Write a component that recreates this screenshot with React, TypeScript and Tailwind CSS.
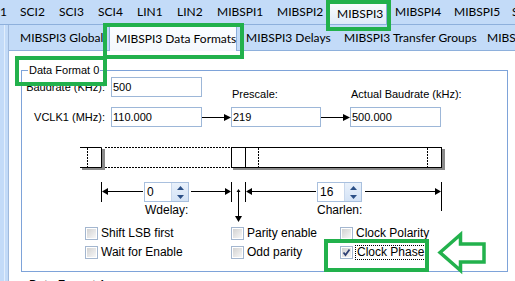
import React from "react";

const beforeTabs = [
  { label: "1", w: "w-[20px]" },
  { label: "SCI2", w: "w-[39px]" },
  { label: "SCI3", w: "w-[39px]" },
  { label: "SCI4", w: "w-[39px]" },
  { label: "LIN1", w: "w-[40px]" },
  { label: "LIN2", w: "w-[40px]" },
  { label: "MIBSPI1", w: "w-[60px]" },
  { label: "MIBSPI2", w: "w-[52px]" },
];

const afterTabs = [
  { label: "MIBSPI4", w: "w-[59px]" },
  { label: "MIBSPI5", w: "w-[58px]" },
  { label: "SCI5", w: "w-[40px]" },
];

function Field({ value, w = "w-[91px]" }: { value: string; w?: string }) {
  return (
    <div
      className={`${w} h-[20px] border border-[#9db7d8] bg-white flex items-center pl-[1px] text-[11px] text-black`}
    >
      {value}
    </div>
  );
}

function Spin({ value }: { value: string }) {
  return (
    <div className="flex w-[45px] h-[20px] border border-[#a9c0de] bg-white">
      <div className="flex-1 flex items-center pl-[2px] text-[12px] leading-none">{value}</div>
      <div className="w-[17px] flex flex-col border-l border-[#c9d8ec] bg-gradient-to-b from-[#e9f1fb] to-[#d4e3f6]">
        <div className="flex-1 flex items-center justify-center">
          <svg width="7" height="4" viewBox="0 0 7 4">
            <path d="M3.5 0 L7 4 L0 4 Z" fill="#2b4f86" />
          </svg>
        </div>
        <div className="flex-1 flex items-center justify-center">
          <svg width="7" height="4" viewBox="0 0 7 4">
            <path d="M0 0 L7 0 L3.5 4 Z" fill="#2b4f86" />
          </svg>
        </div>
      </div>
    </div>
  );
}

function Check({ label, checked, focus }: { label: string; checked?: boolean; focus?: boolean }) {
  return (
    <div className="flex items-center h-[13px]">
      <div className="w-[13px] h-[13px] border border-[#a3b6cf] bg-white p-[1px] shrink-0">
        <div className="w-full h-full bg-gradient-to-br from-[#d2d2d2] to-[#f7f7f7] flex items-center justify-center">
          {checked && (
            <svg width="9" height="9" viewBox="0 0 9 9">
              <path d="M1.5 4.5 L3.5 7 L7.5 1.5" stroke="#2d3f73" strokeWidth="1.8" fill="none" />
            </svg>
          )}
        </div>
      </div>
      <span
        className={`ml-[3px] text-[12px] leading-[13px] whitespace-nowrap ${
          focus ? "outline outline-1 outline-dotted outline-black px-[1px]" : ""
        }`}
      >
        {label}
      </span>
    </div>
  );
}

function Diagram() {
  const head = (x: number, y: number, dir: "l" | "r" | "d") => {
    if (dir === "l") return <path d={`M${x} ${y} L${x + 6} ${y - 3.5} L${x + 6} ${y + 3.5} Z`} fill="#000" />;
    if (dir === "r") return <path d={`M${x} ${y} L${x - 6} ${y - 3.5} L${x - 6} ${y + 3.5} Z`} fill="#000" />;
    return <path d={`M${x} ${y} L${x - 3.5} ${y - 6} L${x + 3.5} ${y - 6} Z`} fill="#000" />;
  };
  return (
    <svg width="372" height="84" viewBox="76 143 372 84" className="block">
      {/* shadows */}
      <rect x="102" y="151" width="3" height="21" fill="#8a8a8a" />
      <rect x="82" y="169" width="23" height="3" fill="#8a8a8a" />
      <rect x="442" y="151" width="3" height="21" fill="#8a8a8a" />
      <rect x="233" y="169" width="212" height="3" fill="#8a8a8a" />
      {/* small left box */}
      <path d="M80 149.5 H101.5 V169.5 H80" stroke="#000" fill="none" />
      <line x1="87.5" y1="150" x2="87.5" y2="169" stroke="#000" strokeDasharray="2 1" />
      {/* dotted span */}
      <line x1="105" y1="149.5" x2="231" y2="149.5" stroke="#000" strokeDasharray="2 1" />
      <line x1="105" y1="169.5" x2="231" y2="169.5" stroke="#000" strokeDasharray="2 1" />
      {/* big box */}
      <rect x="231.5" y="149.5" width="210" height="20" stroke="#000" fill="#fff" />
      <line x1="245.5" y1="150" x2="245.5" y2="169" stroke="#000" />
      <line x1="258.5" y1="150" x2="258.5" y2="169" stroke="#000" strokeDasharray="2 1" />
      <line x1="427.5" y1="150" x2="427.5" y2="169" stroke="#000" strokeDasharray="2 1" />
      {/* dimension line */}
      <line x1="101.5" y1="184" x2="101.5" y2="204" stroke="#000" />
      <line x1="231.5" y1="184" x2="231.5" y2="204" stroke="#000" />
      <line x1="245.5" y1="184" x2="245.5" y2="204" stroke="#000" />
      <line x1="441.5" y1="184" x2="441.5" y2="213" stroke="#000" />
      <line x1="106" y1="193.5" x2="143" y2="193.5" stroke="#000" />
      {head(102, 193.5, "l")}
      <line x1="191" y1="193.5" x2="226" y2="193.5" stroke="#000" />
      {head(231, 193.5, "r")}
      <line x1="251" y1="193.5" x2="316" y2="193.5" stroke="#000" />
      {head(246, 193.5, "l")}
      <line x1="365" y1="193.5" x2="436" y2="193.5" stroke="#000" />
      {head(441, 193.5, "r")}
      <path d="M238.5 191 L236.5 194 L240.5 194 Z" fill="#000" />
      <line x1="238.5" y1="193" x2="238.5" y2="219" stroke="#000" />
      {head(238.5, 224, "d")}
    </svg>
  );
}

export default function App() {
  return (
    <div className="w-[515px] h-[281px] overflow-hidden relative bg-[#c3dbf8] font-['Liberation_Sans',sans-serif] text-black">
      {/* top tab strip */}
      <div className="h-[25px] w-[515px] overflow-hidden flex items-end border-b border-[#8eb0dc] font-['Lato',sans-serif] text-[12px] whitespace-nowrap">
        {beforeTabs.map((t, i) => (
          <div key={i} className={`${t.w} shrink-0 flex items-center h-[24px]`}>
            {t.label}
          </div>
        ))}
        <div className="w-[58px] h-[24px] shrink-0 -mb-[1px] border border-b-0 border-[#8eb0dc] bg-gradient-to-b from-[#fbfdff] to-[#dfeaf8] flex items-center pl-[7px]">
          MIBSPI3
        </div>
        <div className="w-[8px] shrink-0" />
        {afterTabs.map((t, i) => (
          <div key={i} className={`${t.w} shrink-0 flex items-center h-[24px]`}>
            {t.label}
          </div>
        ))}
      </div>

      {/* outer tab page */}
      <div className="flex h-[256px]">
        <div className="w-[9px] shrink-0 flex">
          <div className="w-[4px]" />
          <div className="w-[1px] bg-[#e2eefc]" />
          <div className="w-[3px]" />
          <div className="w-[1px] bg-[#9fb9dc]" />
        </div>
        <div className="w-[506px] shrink-0 flex flex-col overflow-hidden">
          {/* second tab strip */}
          <div className="h-[27px] flex items-end border-b border-[#8eb0dc] font-['Lato',sans-serif] text-[12px] whitespace-nowrap">
            <div className="w-[100px] h-[25px] shrink-0 flex items-center pl-[11px]">MIBSPI3 Global</div>
            <div className="w-[128px] h-[26px] shrink-0 -mb-[1px] border border-b-0 border-[#8eb0dc] bg-gradient-to-b from-[#fbfdff] to-[#f4f8fd] flex items-center pl-[6px]">
              MIBSPI3 Data Formats
            </div>
            <div className="w-[98px] h-[25px] shrink-0 flex items-center pl-[9px]">MIBSPI3 Delays</div>
            <div className="w-[144px] h-[25px] shrink-0 flex items-center pl-[9px]">MIBSPI3 Transfer Groups</div>
            <div className="w-[40px] h-[25px] shrink-0 flex items-center pl-[8px] overflow-hidden">MIBSPI3</div>
          </div>

          {/* white content panel */}
          <div className="flex-1 bg-white flex flex-col">
            <div className="ml-[12px] mt-[19px] w-[487px] h-[202px] shrink-0 border border-[#7ea3d9] relative flex flex-col">
              <div className="absolute -top-[8px] left-[6px] bg-white px-[1px] text-[11px] leading-[14px]">
                Data Format 0
              </div>

              {/* baudrate row */}
              <div className="flex items-start mt-[6px] h-[26px] text-[11px]">
                <div className="w-[83px] h-[20px] flex items-center justify-end">Baudrate (KHz):</div>
                <div className="ml-[6px]">
                  <Field value="500" />
                </div>
                <div className="self-end ml-[30px] w-[119px] leading-[13px] pb-[2px]">Prescale:</div>
                <div className="self-end leading-[13px] pb-[2px]">Actual Baudrate (kHz):</div>
              </div>

              {/* vclk row */}
              <div className="flex items-center mt-[4px] text-[11px]">
                <div className="w-[83px] flex justify-end">VCLK1 (MHz):</div>
                <div className="ml-[6px]">
                  <Field value="110.000" />
                </div>
                <svg width="29" height="20" viewBox="0 0 29 20" className="block">
                  <line x1="0" y1="10.5" x2="24" y2="10.5" stroke="#000" />
                  <path d="M29 10.5 L22 7 L22 14 Z" fill="#000" />
                </svg>
                <Field value="219" w="w-[90px]" />
                <svg width="29" height="20" viewBox="0 0 29 20" className="block">
                  <line x1="0" y1="10.5" x2="24" y2="10.5" stroke="#000" />
                  <path d="M29 10.5 L22 7 L22 14 Z" fill="#000" />
                </svg>
                <Field value="500.000" w="w-[91px]" />
              </div>

              {/* diagram */}
              <div className="relative ml-[54px] mt-[14px] w-[372px] h-[84px] shrink-0">
                <Diagram />
                <div className="absolute left-[68px] top-[41px]">
                  <Spin value="0" />
                </div>
                <div className="absolute left-[241px] top-[41px]">
                  <Spin value="16" />
                </div>
                <div className="absolute left-[69px] top-[62px] text-[12px] leading-[14px]">Wdelay:</div>
                <div className="absolute left-[241px] top-[62px] text-[12px] leading-[14px]">Charlen:</div>
              </div>

              {/* checkboxes */}
              <div className="ml-[63px] mt-[2px] flex flex-col gap-[6px]">
                <div className="flex">
                  <div className="w-[146px]">
                    <Check label="Shift LSB first" />
                  </div>
                  <div className="w-[109px]">
                    <Check label="Parity enable" />
                  </div>
                  <Check label="Clock Polarity" />
                </div>
                <div className="flex">
                  <div className="w-[146px]">
                    <Check label="Wait for Enable" />
                  </div>
                  <div className="w-[109px]">
                    <Check label="Odd parity" />
                  </div>
                  <Check label="Clock Phase" checked focus />
                </div>
              </div>
            </div>
            <div className="ml-[20px] mt-[6px] text-[12px] leading-[14px]">Data Format 1</div>
          </div>
        </div>
      </div>

      {/* annotation overlays */}
      <div className="absolute left-[326px] top-0 w-[65px] h-[31px] border-[4px] border-[#22b14c]" />
      <div className="absolute left-[103px] top-[23px] w-[141px] h-[36px] border-[4px] border-[#22b14c]" />
      <div className="absolute left-[15px] top-[56px] w-[92px] h-[30px] border-[4px] border-[#22b14c]" />
      <div className="absolute left-[324px] top-[239px] w-[105px] h-[33px] border-[4px] border-[#22b14c]" />
      <svg className="absolute left-[434px] top-[230px]" width="56" height="46" viewBox="434 230 56 46">
        <path
          d="M440 252.5 L460.5 234.5 L460.5 244 L484 244 L484 262 L460.5 262 L460.5 270.5 Z"
          fill="#fff"
          stroke="#22b14c"
          strokeWidth="3.5"
          strokeLinejoin="miter"
        />
      </svg>
    </div>
  );
}
